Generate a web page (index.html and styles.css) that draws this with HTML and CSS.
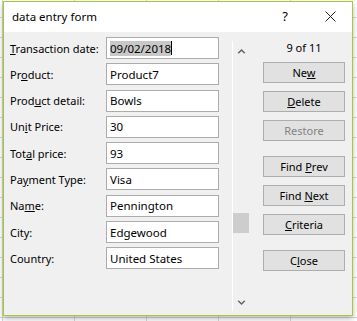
FILE: index.html
```html
<!DOCTYPE html>
<html lang="en">
<head>
  <meta charset="UTF-8" />
  <title>data entry form</title>
  <link rel="stylesheet" href="styles.css">
</head>
<body>
  <div class="sheet">
    <!-- Dialog window over the worksheet -->
    <div class="dialog">
      <div class="titlebar">
        <span class="title">data entry form</span>
        <span class="help">?</span>
        <svg class="close-x" width="11" height="11" viewBox="0 0 11 11">
          <path d="M0.5 0.5 L10.5 10.5 M10.5 0.5 L0.5 10.5" stroke="#222" stroke-width="1" fill="none"/>
        </svg>
      </div>

      <div class="body">
        <div class="fields">
          <div class="row"><label><u>T</u>ransaction date:</label><div class="input"><span class="sel">09/02/2018</span><span class="caret"></span></div></div>
          <div class="row"><label>Pr<u>o</u>duct:</label><div class="input">Product7</div></div>
          <div class="row"><label>Prod<u>u</u>ct detail:</label><div class="input">Bowls</div></div>
          <div class="row"><label>Un<u>i</u>t Price:</label><div class="input">30</div></div>
          <div class="row"><label>Tot<u>a</u>l price:</label><div class="input">93</div></div>
          <div class="row"><label>Pa<u>y</u>ment Type:</label><div class="input">Visa</div></div>
          <div class="row"><label>Na<u>m</u>e:</label><div class="input">Pennington</div></div>
          <div class="row"><label>City:</label><div class="input">Edgewood</div></div>
          <div class="row"><label>Country:</label><div class="input">United States</div></div>
        </div>

        <div class="scrollbar">
          <svg class="arrow" width="9" height="6" viewBox="0 0 9 6"><path d="M0.5 5 L4.5 1 L8.5 5 L7 5.5 L4.5 3 L2 5.5 Z" fill="#606060"/></svg>
          <div class="track"><div class="thumb"></div></div>
          <svg class="arrow" width="9" height="6" viewBox="0 0 9 6"><path d="M0.5 1 L4.5 5 L8.5 1 L7 0.5 L4.5 3 L2 0.5 Z" fill="#606060"/></svg>
        </div>

        <div class="actions">
          <div class="counter">9 of 11</div>
          <button class="btn">Ne<u>w</u></button>
          <button class="btn"><u>D</u>elete</button>
          <button class="btn" disabled>Restore</button>
          <button class="btn gap">Find <u>P</u>rev</button>
          <button class="btn">Find <u>N</u>ext</button>
          <button class="btn"><u>C</u>riteria</button>
          <button class="btn gap">C<u>l</u>ose</button>
        </div>
      </div>
    </div>
  </div>
</body>
</html>
```

FILE: styles.css
```css
/* Worksheet behind the dialog */
body {
  margin: 0;
  font-family: "Noto Sans", sans-serif;
  font-size: 11px;
  color: #000;
}
.sheet {
  position: relative;
  width: 357px;
  height: 321px;
  overflow: hidden;
  background-color: #fff;
  background-image:
    repeating-linear-gradient(to right, transparent 0 2px, #d4d4d4 2px 3px, transparent 3px 72px),
    repeating-linear-gradient(to bottom, transparent 0 17px, #d4d4d4 17px 18px, transparent 18px 20px);
}

/* Dialog window */
.dialog {
  position: absolute;
  left: 3px;
  top: 1px;
  width: 348px;
  height: 313px;
  border: 1px solid #a5c83a;
  background: #f0f0f0;
  box-shadow: 0 3px 6px rgba(0, 0, 0, 0.25);
  display: flex;
  flex-direction: column;
}
.titlebar {
  height: 30px;
  background: #fff;
  display: flex;
  align-items: center;
  padding-left: 8px;
}
.title {
  font-size: 11.5px;
  flex: 1;
  margin-top: -2px;
}
.help {
  font-size: 13px;
  margin-right: 37px;
  margin-top: -2px;
}
.close-x {
  margin-right: 16px;
  margin-top: -1px;
}

.body {
  flex: 1;
  display: flex;
}

/* Field list */
.fields {
  width: 222px;
  padding: 5px 0 0 6px;
  box-sizing: border-box;
  display: flex;
  flex-direction: column;
  gap: 4.3px;
}
.row {
  display: flex;
  align-items: center;
  height: 22px;
}
.row label {
  width: 96px;
}
.input {
  width: 113px;
  height: 22px;
  box-sizing: border-box;
  border: 1px solid #acacac;
  background: #fff;
  padding-left: 3px;
  display: flex;
  align-items: center;
  font-size: 11.5px;
}
.sel {
  background: #c8c8c8;
}
.caret {
  display: inline-block;
  width: 1px;
  height: 14px;
  background: #000;
}

/* Record scrollbar */
.scrollbar {
  width: 16px;
  margin-left: 6px;
  margin-top: 9px;
  margin-bottom: 4px;
  border-left: 1px solid #fff;
  display: flex;
  flex-direction: column;
  align-items: center;
}
.arrow {
  margin: 7px 0 5px 1px;
}
.track {
  flex: 1;
  width: 100%;
  position: relative;
}
.thumb {
  position: absolute;
  left: 0;
  right: 0;
  top: 154px;
  height: 20px;
  background: #cdcdcd;
}

/* Buttons */
.actions {
  margin-left: 14px;
  padding-top: 8px;
  display: flex;
  flex-direction: column;
  width: 82px;
}
.counter {
  text-align: center;
  height: 22px;
}
.btn {
  width: 82px;
  height: 21px;
  margin-bottom: 8px;
  padding: 0;
  font-family: inherit;
  font-size: 11px;
  color: #000;
  background: #e1e1e1;
  border: 1px solid #adadad;
}
.btn:disabled {
  color: #838383;
}
.btn.gap {
  margin-top: 7px;
}
```
